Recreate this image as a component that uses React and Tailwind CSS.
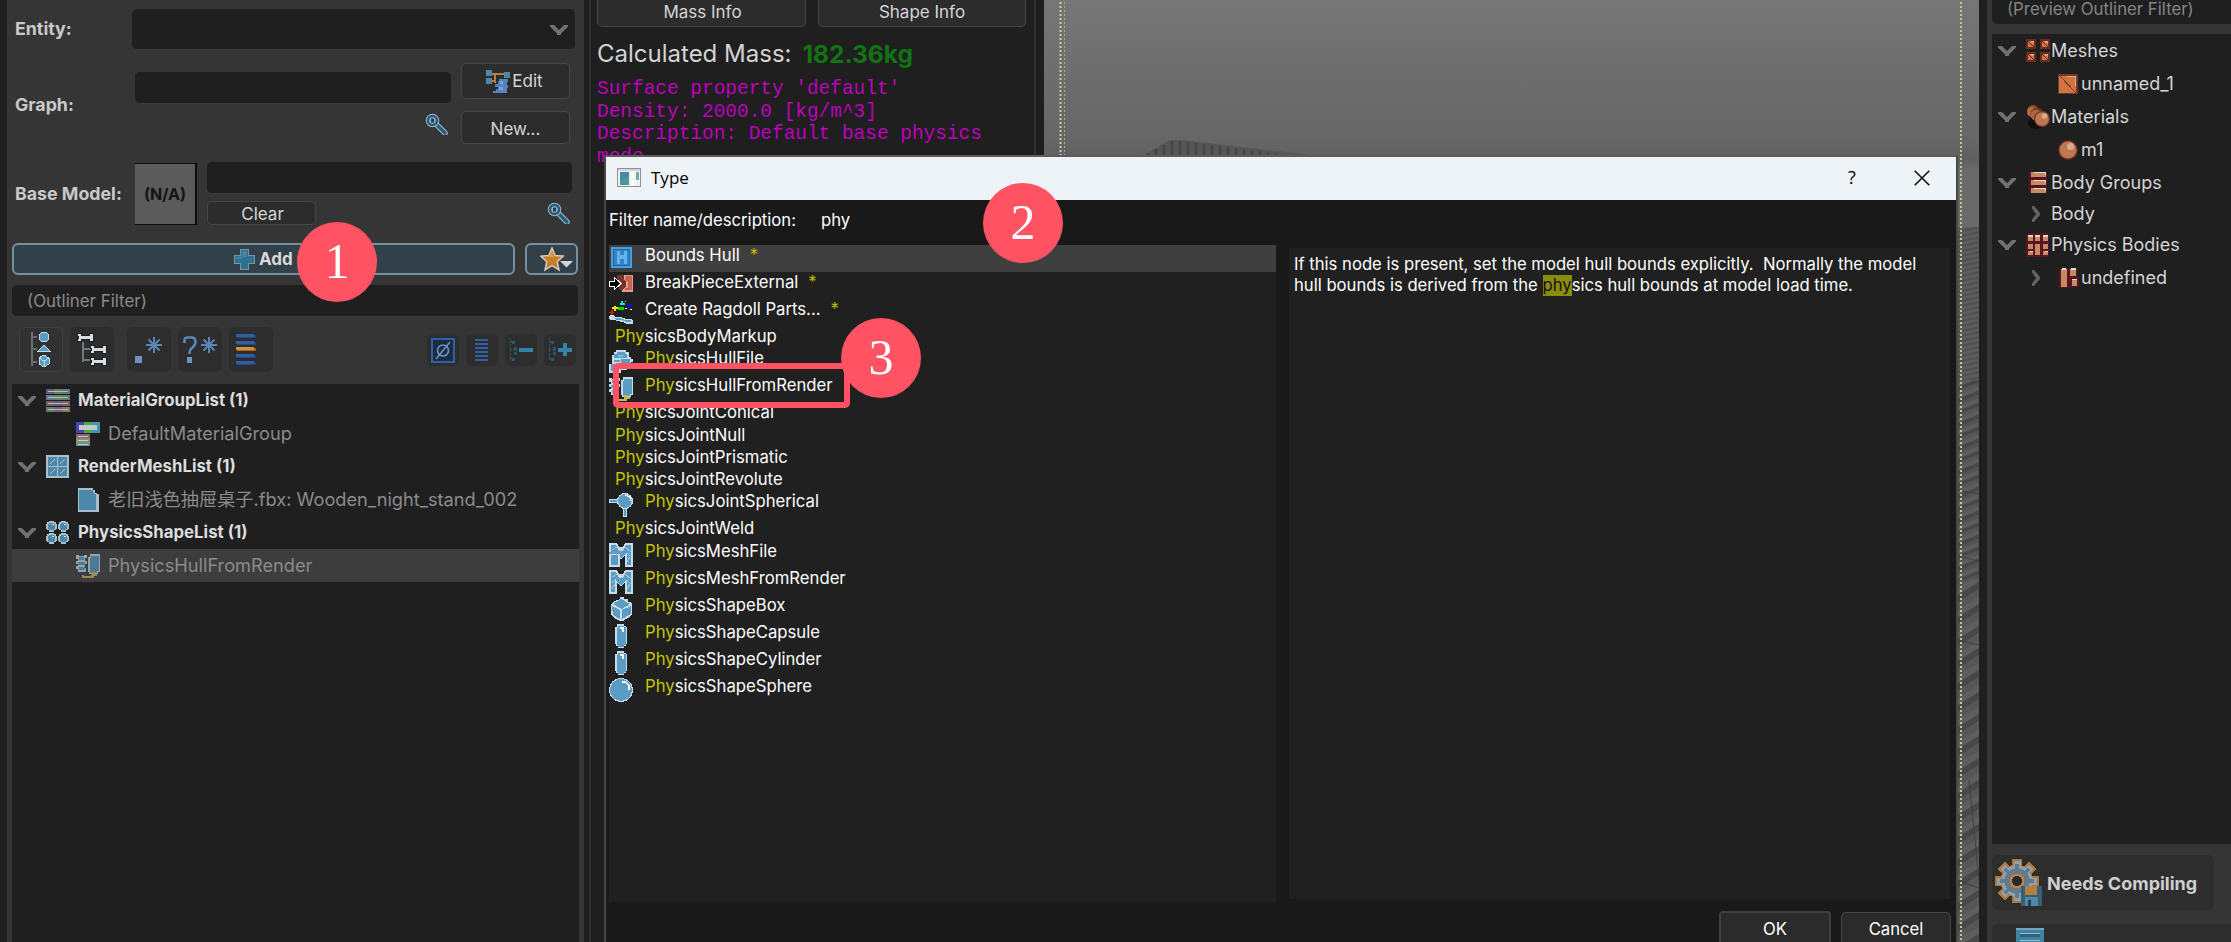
import React from "react";

const B = "#5a9cc4";
const L = "#c3dce8";

function Px({ w = 24, h = 24, vb, className = "", children, smooth }) {
  return (
    <svg
      width={w}
      height={h}
      viewBox={vb || `0 0 ${w} ${h}`}
      className={`block shrink-0 ${className}`}
      shapeRendering={smooth ? "auto" : "crispEdges"}
    >
      {children}
    </svg>
  );
}

/* ---------- small glyphs ---------- */

function ChevronDown() {
  return (
    <Px w={18} h={12} smooth>
      <path d="M0 1h4l5 5 5-5h4v1.500l-7 7V11H7V9.500L0 2.500z" fill="#6f7173" />
    </Px>
  );
}

function ChevronRight() {
  return (
    <Px w={10} h={16} smooth>
      <path d="M1 0h2l6 7v2l-6 7H1v-2.500l4-5.500-4-5.500z" fill="#606264" />
    </Px>
  );
}

function Magnifier() {
  return (
    <Px w={23} h={22} smooth>
      <path d="M12 12l8 8" stroke="#a3b3bb" strokeWidth="5.500" strokeLinecap="round" />
      <path d="M12 12l8 8" stroke="#1f5f86" strokeWidth="3.200" strokeLinecap="round" />
      <circle cx="7.500" cy="7.500" r="6.800" fill="#a3b3bb" />
      <circle cx="7.500" cy="7.500" r="5.800" fill="#1f5f86" />
      <circle cx="7.500" cy="7.500" r="3.200" fill="#a3b3bb" />
      <rect x="6" y="5.500" width="3" height="4" fill="#2b3a42" />
    </Px>
  );
}

function EditIcon() {
  return (
    <Px>
      <path d="M6 4h12M9 5v8M6 11h3" stroke="#b8803c" strokeWidth="2" fill="none" />
      <rect x="0" y="0" width="6" height="6" fill="#4f86a8" />
      <rect x="18" y="2" width="6" height="6" fill="#4f86a8" />
      <rect x="0" y="8" width="6" height="6" fill="#4f86a8" />
      <path d="M13 9h9v3h-1v3h1v3h-1v5H7v-2h3v-2h2v-2h-3v-3h3v-3h1z" fill="#5583c2" />
      <path d="M14 11h3v3h-3zM13 17h4v3h-4z" fill="#78a6dc" />
    </Px>
  );
}

function PlusIcon() {
  return (
    <Px w={21} h={21}>
      <path d="M6 0h9v6h6v9h-6v6H6v-6H0V6h6z" fill="#7894a1" />
      <path d="M7 1h7v6h6v7h-6v6H7v-6H1V7h6z" fill="#2d6f91" />
      <path d="M8 2h5v6H8zM2 8h6v2H2z" fill="#3f87aa" />
    </Px>
  );
}

function StarIcon() {
  return (
    <Px w={33} h={25} smooth>
      <path d="M12 1l3.200 7.500 8 .6-6 5.600 1.800 8.300-7-4.300L5 23l1.800-8.300-6-5.600 8-.6z" fill="#c57d2a" stroke="#d8cdbd" strokeWidth="1.500" />
      <path d="M12 4l2 6H8z" fill="#dc9a42" />
      <path d="M20 14h13l-6.500 6.500z" fill="#d5d5d5" />
    </Px>
  );
}

/* ---------- outliner toolbar ---------- */

function TreeShapesIcon() {
  return (
    <Px w={20} h={36}>
      <path d="M1 0v34M1 5h5M1 17h5M1 30h5" stroke="#6d6d6d" strokeWidth="1.500" fill="none" />
      <circle cx="13" cy="5" r="5" fill={B} stroke={L} />
      <path d="M13 13l6 6H7z" fill={B} stroke={L} />
      <path d="M13 23l5 3v6l-5 3-5-3v-6z" fill={B} stroke={L} />
      <path d="M8 26l5 3 5-3M13 29v6" stroke={L} fill="none" />
    </Px>
  );
}

function Bone({ x, y }) {
  return (
    <path
      transform={`translate(${x} ${y})`}
      d="M0 0h4v2h8V0h4v8h-4V6H4v2H0V5h1V3H0z"
      fill="#dcdcdc"
      stroke="#16232b"
      strokeWidth="1"
    />
  );
}

function BonesIcon() {
  return (
    <Px w={30} h={36}>
      <path d="M6 10v20M6 17h8M6 28h8" stroke="#777" strokeWidth="2" fill="none" />
      <Bone x={0} y={1} />
      <Bone x={13} y={13} />
      <Bone x={13} y={25} />
    </Px>
  );
}

function Asterisk({ x, y }) {
  return (
    <path
      transform={`translate(${x} ${y})`}
      d="M8 0v16M0 8h16M2.500 2.500l11 11M13.500 2.500l-11 11"
      stroke="#5b86b6"
      strokeWidth="2"
      fill="none"
    />
  );
}

function RegexIcon() {
  return (
    <Px w={30} h={28} smooth>
      <rect x="1" y="20" width="7" height="7" fill="#6c93c0" />
      <Asterisk x={12} y={1} />
    </Px>
  );
}

function WildcardIcon() {
  return (
    <Px w={34} h={28} smooth>
      <path d="M1.500 7V4q0-2.500 3-2.500h4q4 0 4 4.500 0 3-3 5.500-3 2-3 6.500" stroke="#5b86b6" strokeWidth="2.600" fill="none" />
      <rect x="4" y="21" width="5" height="6" fill="#6c93c0" />
      <Asterisk x={18} y={1} />
    </Px>
  );
}

function StripesIcon() {
  return (
    <Px w={21} h={32}>
      {[0, 7, 13, 20, 27].map((y, i) => (
        <g key={y}>
          <rect x="1" y={y + 1} width="19" height="3" fill={i === 2 ? "#a8641f" : "#27467c"} />
          <rect x="0" y={y} width="18" height="3" fill={i === 2 ? "#d0923a" : "#2f5fa5"} />
        </g>
      ))}
    </Px>
  );
}

function EmptySetIcon() {
  return (
    <Px w={24} h={25} smooth>
      <rect x="1" y="1" width="22" height="23" fill="#1c2c44" stroke="#2f5fa5" strokeWidth="2" />
      <circle cx="12" cy="12.500" r="5.500" fill="none" stroke="#6c93c0" strokeWidth="1.600" />
      <path d="M19 4L5 21" stroke="#6c93c0" strokeWidth="1.600" />
    </Px>
  );
}

function LinesIcon() {
  return (
    <Px w={14} h={22}>
      {[0, 4, 8, 12, 16, 20].map((y) => (
        <rect key={y} x="0" y={y} width="13" height="2" fill="#2f5fa5" />
      ))}
    </Px>
  );
}

function CollapseIcon({ plus }) {
  return (
    <Px w={24} h={24}>
      <path d="M1 0v22M1 3h3M1 11h6M1 20h3" stroke="#2d5566" fill="none" strokeDasharray="2 1" />
      <rect x="3" y="3" width="3" height="3" fill="#2d5566" />
      <rect x="5" y="9" width="3" height="4" fill="#2d5566" />
      <rect x="5" y="14" width="3" height="3" fill="#2d5566" />
      <rect x="3" y="20" width="3" height="3" fill="#2d5566" />
      <rect x="10" y="10" width="14" height="4" fill="#3583a8" />
      {plus && <rect x="15" y="5" width="4" height="13" fill="#3583a8" />}
    </Px>
  );
}

/* ---------- outliner tree ---------- */

function MaterialListIcon() {
  const c = [
    ["#635b80", "#65815c", "#5c777e"],
    ["#5c7f87", "#628467", "#5f7b71"],
    ["#805c64", "#635b80", "#805c64"],
    ["#65815c", "#805c7a", "#807e62"],
  ];
  return (
    <Px>
      {c.map((r, i) => (
        <g key={i}>
          {r.map((k, j) => (
            <rect key={j} x={j * 8} y={i * 6} width="8" height="5" fill={k} />
          ))}
          <rect x="2" y={i * 6 + 2} width="20" height="1" fill="#b6bcb6" />
        </g>
      ))}
    </Px>
  );
}

function MaterialGroupIcon() {
  return (
    <Px>
      <rect x="0" y="0" width="8" height="11" fill="#4545b5" />
      <rect x="8" y="0" width="8" height="11" fill="#49a94b" />
      <rect x="16" y="0" width="8" height="11" fill="#4691b5" />
      <rect x="3" y="3" width="18" height="5" fill="#bccdc4" />
      <rect x="0" y="12" width="14" height="4" fill="#8f5f7a" />
      <rect x="0" y="16" width="14" height="4" fill="#8a9068" />
      <rect x="0" y="20" width="14" height="4" fill="#639596" />
      <path d="M2 14h10M2 18h10M2 22h10" stroke="#c4c8c0" />
    </Px>
  );
}

function MeshListIcon() {
  return (
    <Px>
      <rect width="23" height="23" fill="#a9c0cc" />
      {[2, 12].map((x) =>
        [2, 12].map((y) => (
          <g key={`${x}-${y}`}>
            <rect x={x} y={y} width="9" height="9" fill="#4d87aa" />
            <path d={`M${x + 2} ${y + 7}L${x + 7} ${y + 2}`} stroke="#a9c0cc" />
          </g>
        ))
      )}
    </Px>
  );
}

function FileIcon() {
  return (
    <Px>
      <path d="M2 0h15v2h2v3h2v1h2v18H2z" fill="#a9c0cc" />
      <path d="M3 2h14v2h1v2h2v16H3z" fill="#4d87aa" />
    </Px>
  );
}

function ShapeListIcon() {
  return (
    <Px>
      {[0, 12].map((x) =>
        [0, 12].map((y) => (
          <g key={`${x}-${y}`} transform={`translate(${x} ${y})`}>
            <path d="M3 0h5v1h2v2h1v5h-1v1H8v2H3V9H1V8H0V3h1V1h2z" fill="#a9c0cc" />
            <path d="M3 2h5v1h1v5H8v1H3V8H2V3h1z" fill="#4d87aa" />
            <rect x="6" y="3" width="2" height="1" fill="#dde9ee" />
          </g>
        ))
      )}
    </Px>
  );
}

function HullRenderIcon({ dim }) {
  return (
    <Px className={dim ? "opacity-65" : ""}>
      <path d="M0 1h3v1h5V1h3v3H9v3h2v3H9v4h1v4H2v-3H0v-3h2v-2H0V7h2V5H0z" fill={L} />
      <path d="M3 3h5v3H3zM2 8h7v3H2zM3 13h6v3H3z" fill={B} />
      <path d="M14 0h10v18h-2v2h-9v-2h-1V3h2z" fill={L} />
      <path d="M15 2h8v15h-2v2h-7V4h1z" fill={B} />
      <path d="M7 21v2h10v-2" stroke="#c4b958" strokeWidth="1.500" fill="none" />
      <path d="M15 18h4v2h2v2h-6z" fill="#c4b958" />
    </Px>
  );
}

/* ---------- dialog list icons ---------- */

function BoundsIcon() {
  return (
    <Px>
      <rect x="2" y="0" width="21" height="21" fill="#3ea1ec" />
      <path d="M4.500 2.500h16v16h-16z" fill="#4080b8" stroke="#256496" />
      <path d="M8 4h3v4h4V4h3v13h-3v-5h-4v5H8z" fill="#5ab4f5" />
    </Px>
  );
}

function BreakIcon() {
  return (
    <Px>
      <path d="M8 1h16v17H13v-4h3V9l-2-2V4z" fill="#dba090" />
      <path d="M17 2h6v14h-7v-2h3V8l-3-2z" fill="#d1604c" />
      <path d="M8 1h7v4l2 3v5l-4 3h-3z" fill="#74332b" />
      <path d="M0 7h5V3l7 6.500L5 16v-4H0z" fill="#000" stroke="#fff" strokeWidth="1" />
    </Px>
  );
}

function RagdollIcon() {
  return (
    <Px>
      <path d="M12 0h2v2h2v2h-4zM11 2h4v2h-4z" fill="#00e5e5" />
      <path d="M19 3h3v3h-3zM18 3h5v2h-5z" fill="#1010e0" />
      <path d="M5 5h2v5H5zM3 6h6v2H3z" fill="#e8e800" />
      <path d="M9 6h6v3H9z" fill="#00d800" />
      <path d="M2 9h2v5H2zM0 11h5v1H0z" fill="#e01010" />
      <path d="M16 0h1v1h-1zM16 7h2v1h-2zM21 8h2v1h-2z" fill="#fff" />
      <path d="M1 14h4l1 2h6l5 2h5l2 2v3h-6l-4-2-6-1-3-1H1l-1-2z" fill={L} />
      <path d="M6 17h5l5 2h6v2h-4l-5-2H7z" fill={B} />
    </Px>
  );
}

function HullFileIcon() {
  return (
    <Px>
      <path d="M7 0h10v2h3v5h2v2h2v3h-2v5h-4v3h-6v3H0v-9h3V5h2V2h2z" fill={L} />
      <path d="M8 2h8v2h2v4H5V4h3zM5 10h6v2H5zM12 9h9v6h-3v3h-6v-4zM2 14h7v7H2z" fill={B} />
      <path d="M9 5h5v2H9z" fill="#8bbad4" />
    </Px>
  );
}

function SphericalIcon() {
  return (
    <Px>
      <rect x="0" y="6" width="10" height="4" fill={L} />
      <rect x="1" y="7" width="9" height="2" fill={B} />
      <rect x="14" y="14" width="4" height="10" fill={L} />
      <rect x="15" y="15" width="2" height="8" fill={B} />
      <circle cx="16" cy="8" r="8" fill={L} />
      <circle cx="16" cy="8" r="6.800" fill={B} />
      <path d="M16 2l5 2 1 4" stroke="#fff" strokeWidth="1.500" fill="none" />
    </Px>
  );
}

function MeshMIcon({ file }) {
  return (
    <Px>
      <path d="M0 0h8l2 4h4l2-4h8v24h-8V13l-4 3-4-3v11H0z" fill={L} />
      <path d="M2 2h5l3 6h4l3-6h5v20h-4V10l-6 5-6-5v12H2z" fill={B} />
      <path d="M3 7l5-3M16 4l6 5M3 13l4-4M18 10l4 4M18 19l3-5M3 19l3-5" stroke="#9cc3d9" />
      {file && <path d="M0 10h9l2 2v12H0z" fill={L} />}
      {file && <path d="M2 12h7v10H2z" fill={B} />}
      {file && <path d="M0 9h12v2H0z" fill="#7d99a8" />}
    </Px>
  );
}

function BoxIcon() {
  return (
    <Px>
      <path d="M11 0h4v2h4v3h3l1 2v10l-4 4-5 3h-3l-6-3-3-4V7l4-3 5-2z" fill={L} />
      <path d="M12 2l9 5-8 5-9-5zM3 9l8 4v9l-7-4zM22 9v8l-9 5v-9z" fill={B} />
    </Px>
  );
}

function CapsuleIcon() {
  return (
    <Px>
      <path d="M8 0h7v2h2v1h1v17h-1v2h-2v2H9v-2H7v-2H6V3h2z" fill={L} />
      <path d="M9 2h6v1h2v18h-2v2H9v-2H8V4h1z" fill={B} />
      <path d="M11 4h3v4" stroke="#fff" strokeWidth="1.500" fill="none" />
    </Px>
  );
}

function SphereIcon() {
  return (
    <Px>
      <circle cx="12" cy="12" r="12" fill={L} />
      <circle cx="12" cy="12" r="10.800" fill={B} />
      <path d="M13 3.500h3l4 4v4" stroke="#fff" strokeWidth="2" fill="none" />
    </Px>
  );
}

/* ---------- preview outliner icons ---------- */

function MeshesIcon() {
  return (
    <Px w={24} h={24}>
      {[0, 14].map((x) =>
        [0, 13].map((y) => (
          <g key={`${x}-${y}`} transform={`translate(${x} ${y})`}>
            <rect width="10" height="10" fill="#672d22" />
            <rect x="2" y="2" width="6" height="6" fill="#cf7444" />
            <rect x="5" y="2" width="3" height="2" fill="#e0a07c" />
            <path d="M2 2l6 6" stroke="#5f2415" />
          </g>
        ))
      )}
    </Px>
  );
}

function MeshIcon() {
  return (
    <Px w={20} h={20}>
      <rect width="20" height="20" fill="#74382a" />
      <rect x="1" y="2" width="17" height="17" fill="#cf7444" />
      <path d="M9 2h9v10h-1V3H9z" fill="#dca88c" />
      <path d="M2 2l16 17" stroke="#8a3c22" />
    </Px>
  );
}

function MaterialsIcon() {
  return (
    <Px w={24} h={24} smooth>
      <ellipse cx="10" cy="18" rx="8" ry="6" fill="#0e0e0e" />
      <circle cx="7" cy="6" r="6" fill="#8f4a30" />
      <circle cx="6" cy="7" r="5" fill="#b56a48" />
      <circle cx="11" cy="9" r="6.500" fill="#6d3222" />
      <circle cx="10" cy="10" r="5.500" fill="#a86244" />
      <circle cx="16" cy="14" r="8" fill="#783a26" />
      <circle cx="16" cy="14" r="6.800" fill="#c0764f" />
      <circle cx="18.500" cy="11" r="2.800" fill="#d9ac90" />
    </Px>
  );
}

function MaterialIcon() {
  return (
    <Px w={20} h={20} smooth>
      <circle cx="10" cy="10" r="9.800" fill="#6d3222" />
      <circle cx="10" cy="10" r="8.500" fill="#c0764f" />
      <circle cx="12.500" cy="6.500" r="3.500" fill="#d9ac90" />
    </Px>
  );
}

function BodyGroupsIcon() {
  return (
    <Px w={24} h={22}>
      <rect x="3" y="0" width="18" height="21" fill="#5a1320" />
      {[0, 8, 16].map((y) => (
        <g key={y}>
          <rect x="5" y={y} width="15" height="5" fill="#c58a60" />
          <path d={`M8 ${y}h12v3h-1v-2H8z`} fill="#dcdad6" />
        </g>
      ))}
    </Px>
  );
}

function BodiesIcon() {
  return (
    <Px w={24} h={24}>
      <path d="M1 0h22v24H0V2z" fill="#5a1320" />
      {[2, 9, 17].map((x) => (
        <g key={x} fill="#c58a60">
          <rect x={x} y="2" width="5" height="6" />
          <rect x={x} y="11" width="5" height="5" />
          <rect x={x} y="18" width="5" height="4" />
          <rect x={x} y="2" width="5" height="2" fill="#dcdad6" />
          <rect x={x + 2} y="18" width="3" height="1" fill="#dcdad6" />
        </g>
      ))}
      <rect x="9" y="11" width="5" height="11" fill="#c58a60" />
    </Px>
  );
}

function BodyIcon() {
  return (
    <Px w={20} h={20}>
      <path d="M2 0h6l2 1 2-1h6v9h2v10h-9l-2 1H2l-2-1V2z" fill="#5a1320" />
      <rect x="2" y="1" width="6" height="18" fill="#c58a60" />
      <rect x="11" y="1" width="6" height="7" fill="#c58a60" />
      <rect x="13" y="11" width="5" height="7" fill="#c58a60" />
      <path d="M3 0h4v2H3zM12 0h5v2h-5zM13 11h5v1h-5z" fill="#dcdad6" />
    </Px>
  );
}

function GearIcon() {
  return (
    <Px w={48} h={48}>
      <g transform="translate(22 22)">
        {[0, 45, 90, 135].map((a) => (
          <rect key={a} x="-5" y="-22" width="10" height="44" transform={`rotate(${a})`} fill="#b07638" />
        ))}
        <circle r="16.500" fill="#b07638" />
        {[0, 45, 90, 135].map((a) => (
          <rect key={a} x="-3.500" y="-20" width="7" height="40" transform={`rotate(${a})`} fill="#8f9fab" />
        ))}
        <circle r="15.500" fill="#8f9fab" />
        <circle r="12.500" fill="#627a8d" />
        {[0, 45, 90, 135].map((a) => (
          <rect key={a} x="-2" y="-17" width="4" height="34" transform={`rotate(${a})`} fill="#627a8d" />
        ))}
        <circle r="7.500" fill="#c08040" />
        <circle r="5" fill="#252a2e" />
      </g>
      <rect x="26" y="27" width="21" height="20" fill="#356078" />
      <rect x="30" y="27" width="12" height="9" fill="#b57f42" />
      <rect x="30" y="38" width="13" height="9" fill="#5088a6" />
      <rect x="33" y="41" width="3" height="6" fill="#1f3f52" />
    </Px>
  );
}

function DocIcon() {
  return (
    <Px w={28} h={14}>
      <rect width="28" height="18" fill="#3f83a3" />
      <rect width="28" height="2" fill="#78a4ba" />
      <path d="M4 5h20M4 12h20" stroke="#93bccf" />
      <rect x="4" y="6" width="20" height="3" fill="#2c6380" />
    </Px>
  );
}

function WindowIcon() {
  return (
    <Px w={24} h={20}>
      <rect x="0.500" y="0.500" width="23" height="18" fill="#eef0f2" stroke="#8b9197" />
      <rect x="1" y="1" width="22" height="2" fill="#cfd6de" />
      <rect x="3" y="4" width="9" height="13" fill="#4c9a94" />
      <path d="M3 4h9v4l-9 5z" fill="#4a88a8" />
      <rect x="14" y="4" width="4" height="6" fill="#fff" />
      <rect x="19" y="4" width="3" height="8" fill="#6fb0a8" />
      <rect x="14" y="12" width="4" height="5" fill="#fff" />
    </Px>
  );
}

/* ---------- pieces ---------- */

const field = "rounded-[5px] bg-[#1f1f1f] border-b border-[#3a3a3a]";
const button =
  "flex items-center justify-center rounded-[5px] border border-[#474747] bg-[#2c2c2c] text-[#d6d6d6]";

function ToolButton({ children, className = "" }) {
  return (
    <div className={`flex h-[45px] w-[44px] shrink-0 items-center justify-center rounded-[6px] bg-[#2d2d2d] pt-[1px] ${className}`}>
      {children}
    </div>
  );
}

function SmallTool({ children }) {
  return (
    <div className="flex h-8 w-8 shrink-0 items-center justify-center rounded-[6px] bg-[#2d2d2d] pt-[1px]">{children}</div>
  );
}

function GroupRow({ icon, children }) {
  return (
    <div className="flex h-[33px] items-center pl-[6px]">
      <ChevronDown />
      <div className="ml-[10px] mr-2 w-6">{icon}</div>
      <span className="text-[16.800px] font-bold text-[#dcdcdc]">{children}</span>
    </div>
  );
}

function ItemRow({ icon, selected, children }) {
  return (
    <div className={`flex h-[33px] items-center pl-16 ${selected ? "bg-[#3d3d3d]" : ""}`}>
      <div className="mr-2 w-6">{icon}</div>
      <span className="text-[18.200px] text-[#8b8b8b]">{children}</span>
    </div>
  );
}

function LeftPanel() {
  return (
    <div className="flex w-[577px] shrink-0 flex-col bg-[#353535] pl-[5px] pt-[9px]">
      <div className="flex h-[41px] items-center">
        <div className="w-[120px] pl-[3px] text-[17.800px] font-bold text-[#c9c9c9]">Entity:</div>
        <div className={`flex h-full w-[443px] items-center justify-end pr-[7px] pt-[1px] ${field}`}>
          <ChevronDown />
        </div>
      </div>
      <div className="mt-[13px] flex h-[81px]">
        <div className="flex w-[123px] items-center pl-[3px] pt-[3px] text-[17.800px] font-bold text-[#c9c9c9]">
          Graph:
        </div>
        <div className="flex w-[316px] flex-col items-end pt-[9px]">
          <div className={`h-8 w-full ${field}`} />
          <div className="mr-[3px] mt-[9px]">
            <Magnifier />
          </div>
        </div>
        <div className="ml-[10px] flex w-[109px] flex-col justify-between text-[17px]">
          <div className={`h-9 pr-[2px] pt-[2px] ${button}`}>
            <EditIcon />
            <span className="ml-[2px]">Edit</span>
          </div>
          <div className={`h-[33px] pt-1 ${button}`}>New...</div>
        </div>
      </div>
      <div className="mt-[18px] flex h-[63px]">
        <div className="flex w-[123px] items-center pl-[3px] pt-[2px] text-[17.800px] font-bold text-[#c9c9c9]">
          Base Model:
        </div>
        <div className="mt-[1px] flex w-[62px] items-center justify-center border-b border-r-2 border-t border-[#0d0d0d] bg-[#5b5b5b] text-[16px] font-bold text-[#141414]">
          (N/A)
        </div>
        <div className="ml-[10px] flex w-[365px] flex-col justify-between">
          <div className={`h-8 ${field}`} />
          <div className="flex h-6 items-start justify-between">
            <div className={`h-6 w-[109px] pl-[2px] pt-1 text-[17px] ${button}`}>Clear</div>
            <div className="mt-[1px] pr-[2px]">
              <Magnifier />
            </div>
          </div>
        </div>
      </div>
      <div className="mt-[18px] flex h-8 gap-[10px]">
        <div className="flex w-[503px] items-center rounded-[6px] border-2 border-[#7690a0] bg-[#324049] pl-[220px] pt-[1px] text-[17px] font-bold text-[#d9d9d9]">
          <PlusIcon />
          <span className="ml-1">Add</span>
        </div>
        <div className="flex w-[53px] items-center rounded-[6px] border-2 border-[#7690a0] bg-[#324049] pl-[13px]">
          <StarIcon />
        </div>
      </div>
      <div className={`mt-[10px] flex h-8 w-[566px] items-center pl-[15px] pt-[2px] text-[16.900px] text-[#8a8a8a] ${field}`}>
        (Outliner Filter)
      </div>
      <div className="mt-[10px] flex h-[45px] w-[566px] items-center pl-[7px]">
        <ToolButton className="border border-[#3f3f3f] bg-[#313131]">
          <TreeShapesIcon />
        </ToolButton>
        <ToolButton className="ml-[7px]">
          <BonesIcon />
        </ToolButton>
        <ToolButton className="ml-[13px]">
          <RegexIcon />
        </ToolButton>
        <ToolButton className="ml-[7px]">
          <WildcardIcon />
        </ToolButton>
        <ToolButton className="ml-[7px] pr-[10px]">
          <StripesIcon />
        </ToolButton>
        <div className="ml-auto flex gap-[7px] pr-[2px]">
          <SmallTool>
            <EmptySetIcon />
          </SmallTool>
          <SmallTool>
            <LinesIcon />
          </SmallTool>
          <SmallTool>
            <CollapseIcon />
          </SmallTool>
          <SmallTool>
            <CollapseIcon plus />
          </SmallTool>
        </div>
      </div>
      <div className="mt-3 w-[567px] flex-1 bg-[#1f1f1f]">
        <GroupRow icon={<MaterialListIcon />}>MaterialGroupList (1)</GroupRow>
        <ItemRow icon={<MaterialGroupIcon />}>DefaultMaterialGroup</ItemRow>
        <GroupRow icon={<MeshListIcon />}>RenderMeshList (1)</GroupRow>
        <ItemRow icon={<FileIcon />}>老旧浅色抽屉桌子.fbx: Wooden_night_stand_002</ItemRow>
        <GroupRow icon={<ShapeListIcon />}>PhysicsShapeList (1)</GroupRow>
        <ItemRow icon={<HullRenderIcon dim />} selected>
          PhysicsHullFromRender
        </ItemRow>
      </div>
    </div>
  );
}

function MassPanel() {
  return (
    <div className="ml-[5px] w-[447px] shrink-0 border-x-2 border-[#303030] bg-[#1f1f1f] pl-[6px]">
      <div className="flex h-[27px] gap-3 text-[17px] text-[#d6d6d6]">
        <div className="flex w-[209px] justify-center rounded-b-[5px] border border-t-0 border-[#474747] bg-[#2c2c2c] pl-[2px] pt-[1px] leading-[22px]">
          Mass Info
        </div>
        <div className="flex w-[208px] justify-center rounded-b-[5px] border border-t-0 border-[#474747] bg-[#2c2c2c] pt-[1px] leading-[22px]">
          Shape Info
        </div>
      </div>
      <div className="mt-[11px] flex h-8 items-center gap-[11px] whitespace-nowrap text-[24px] text-[#d3d3d3]">
        <span>Calculated Mass:</span>
        <span className="text-[24.500px] font-bold text-[#127312]">182.36kg</span>
      </div>
      <div className="mt-2 whitespace-pre font-['Liberation_Mono',monospace] text-[19.450px] leading-[22.500px] text-[#bd00bd]">
        {"Surface property 'default'\nDensity: 2000.0 [kg/m^3]\nDescription: Default base physics\nmode"}
      </div>
    </div>
  );
}

function Viewport() {
  return (
    <div className="ml-[8px] w-[935px] shrink-0">
      <svg width="935" height="942" viewBox="0 0 935 942" className="block">
        <defs>
          <linearGradient id="sky" x1="0" y1="0" x2="0" y2="1">
            <stop offset="0" stopColor="#767676" />
            <stop offset="0.150" stopColor="#666" />
            <stop offset="0.170" stopColor="#5f5f5f" />
            <stop offset="0.180" stopColor="#6a6a6a" />
            <stop offset="1" stopColor="#646464" />
          </linearGradient>
          <pattern id="step" width="90" height="12" patternUnits="userSpaceOnUse" patternTransform="skewY(-22)">
            <rect width="90" height="12" fill="#555" />
            <rect width="90" height="4" fill="#494949" />
            <rect y="8" width="90" height="4" fill="#5e5e5e" />
          </pattern>
          <pattern id="fine" width="90" height="5" patternUnits="userSpaceOnUse" patternTransform="skewY(-12)">
            <rect width="90" height="5" fill="#5c5c5c" />
            <rect width="90" height="2" fill="#4f4f4f" />
          </pattern>
          <pattern id="big" width="90" height="22" patternUnits="userSpaceOnUse" patternTransform="skewY(-32)">
            <rect width="90" height="22" fill="#565656" />
            <rect width="90" height="7" fill="#484848" />
            <rect y="15" width="90" height="7" fill="#5e5e5e" />
          </pattern>
        </defs>
        <rect width="935" height="942" fill="url(#sky)" />
        <path d="M96 157l30-17h12l146 17z" fill="#565656" />
        {[104, 112, 120, 128, 136, 144, 152, 160, 168, 176, 184, 192, 200, 208, 216, 224, 232].map((x) => (
          <path
            key={x}
            d={`M${x} 157V${x < 130 ? 153 - (x - 104) / 2 : 140 + (x - 128) * 0.13}`}
            stroke="#464646"
            strokeWidth="2.500"
          />
        ))}
        <rect x="910" y="227" width="25" height="153" fill="url(#fine)" />
        <rect x="910" y="380" width="25" height="200" fill="url(#step)" />
        <rect x="910" y="580" width="25" height="362" fill="url(#big)" />
        <path d="M912 490l23 4M912 556l23 5M912 640l23 5M912 880l23 8M925 780l10 100" stroke="#424242" fill="none" />
        <path d="M16.500 2v155" stroke="#cfcfa4" strokeWidth="2" strokeDasharray="2 2" />
        <path d="M20.500 2v155" stroke="#b8a480" strokeWidth="1" strokeDasharray="2 2" />
        <path d="M917 2v940" stroke="#c4c49a" strokeWidth="2" strokeDasharray="2 2" />
      </svg>
    </div>
  );
}

function PreviewRow({ icon, gap = "ml-[10px]", children }) {
  return (
    <div className="flex h-[33px] items-center pl-[6px]">
      <ChevronDown />
      <div className={`mr-[1px] w-6 ${gap}`}>{icon}</div>
      <span>{children}</span>
    </div>
  );
}

function RightPanel() {
  return (
    <div className="ml-[8px] flex w-[244px] shrink-0 flex-col overflow-hidden whitespace-nowrap bg-[#353535] pl-[5px]">
      <div className="h-6 shrink-0 rounded-bl-[5px] bg-[#1f1f1f] pl-[15px] text-[16.800px] leading-[18px] text-[#858585]">
        (Preview Outliner Filter)
      </div>
      <div className="mt-[10px] h-[810px] shrink-0 bg-[#1f1f1f] text-[18px] text-[#d4d4d4]">
        <PreviewRow icon={<MeshesIcon />}>Meshes</PreviewRow>
        <div className="flex h-[33px] items-center gap-[3px] pl-[66px]">
          <MeshIcon />
          unnamed_1
        </div>
        <PreviewRow icon={<MaterialsIcon />}>Materials</PreviewRow>
        <div className="flex h-[33px] items-center gap-[3px] pl-[66px]">
          <MaterialIcon />
          m1
        </div>
        <PreviewRow icon={<BodyGroupsIcon />}>Body Groups</PreviewRow>
        <div className="flex h-[29px] items-center gap-[10px] pl-[39px]">
          <ChevronRight />
          Body
        </div>
        <PreviewRow icon={<BodiesIcon />}>Physics Bodies</PreviewRow>
        <div className="flex h-[33px] items-center pl-[39px]">
          <ChevronRight />
          <div className="ml-[18px] mr-[2px]">
            <BodyIcon />
          </div>
          undefined
        </div>
      </div>
      <div className="mt-[11px] flex h-[55px] w-[222px] shrink-0 items-center gap-[4px] rounded-[6px] bg-[#2d2d2d] pl-[3px] text-[18px] font-bold text-[#cfcfcf]">
        <GearIcon />
        <span className="pt-[2px]">Needs Compiling</span>
      </div>
      <div className="mt-[14px] flex-1 rounded-tl-[6px] bg-[#2d2d2d] pl-6 pt-1">
        <DocIcon />
      </div>
    </div>
  );
}

const TYPES = [
  { icon: <BoundsIcon />, text: "Bounds Hull", star: true, selected: true },
  { icon: <BreakIcon />, text: "BreakPieceExternal", star: true },
  { icon: <RagdollIcon />, text: "Create Ragdoll Parts...", star: true },
  { match: "Phy", text: "sicsBodyMarkup" },
  { icon: <HullFileIcon />, match: "Phy", text: "sicsHullFile" },
  { icon: <HullRenderIcon />, match: "Phy", text: "sicsHullFromRender" },
  { match: "Phy", text: "sicsJointConical" },
  { match: "Phy", text: "sicsJointNull" },
  { match: "Phy", text: "sicsJointPrismatic" },
  { match: "Phy", text: "sicsJointRevolute" },
  { icon: <SphericalIcon />, match: "Phy", text: "sicsJointSpherical" },
  { match: "Phy", text: "sicsJointWeld" },
  { icon: <MeshMIcon file />, match: "Phy", text: "sicsMeshFile" },
  { icon: <MeshMIcon />, match: "Phy", text: "sicsMeshFromRender" },
  { icon: <BoxIcon />, match: "Phy", text: "sicsShapeBox" },
  { icon: <CapsuleIcon />, match: "Phy", text: "sicsShapeCapsule" },
  { icon: <CapsuleIcon />, match: "Phy", text: "sicsShapeCylinder" },
  { icon: <SphereIcon />, match: "Phy", text: "sicsShapeSphere" },
];

function TypeRow({ icon, match, text, star, selected }) {
  return (
    <div
      className={`flex items-start whitespace-nowrap ${icon ? "h-[27px]" : "h-[22.300px] pl-[6px]"} ${
        selected ? "bg-[#3f3f3f]" : ""
      }`}
    >
      {icon && <div className="mr-3 h-6 w-6 shrink-0 pt-[2px]">{icon}</div>}
      <span className="leading-[21px]">
        {match && <span className="text-[#c3c400]">{match}</span>}
        {text}
        {star && <span className="ml-[10px] text-[#b8b800]">*</span>}
      </span>
    </div>
  );
}

function TypeDialog() {
  return (
    <div className="absolute left-[604px] top-[155px] flex h-[787px] w-[1354px] flex-col border-x-2 border-t-2 border-x-[#484848] border-t-[#5c5c5c] bg-[#191919] text-[16.700px] text-white">
      <div className="flex h-[43px] shrink-0 items-center bg-[#eef3f8] pb-[2px] pl-[11px] text-black">
        <WindowIcon />
        <span className="ml-[10px] flex-1 font-['Open_Sans',sans-serif] text-[17px]">Type</span>
        <span className="w-[10px] text-center font-['Open_Sans',sans-serif] text-[18px]">?</span>
        <svg width="16" height="16" viewBox="0 0 16 16" className="ml-[57px] mr-[26px] block">
          <path d="M.7.7l14.600 14.600M15.300.7L.7 15.300" stroke="#111" strokeWidth="1.600" />
        </svg>
      </div>
      <div className="flex h-[45px] shrink-0 items-center pb-[4px] pl-[3px]">
        <span className="w-[212px] whitespace-nowrap">Filter name/description:</span>
        <span>phy</span>
      </div>
      <div className="flex flex-1 gap-[13px] pl-[3px]">
        <div className="h-[657px] w-[667px] bg-[#202020]">
          {TYPES.map((t) => (
            <TypeRow key={t.text} {...t} />
          ))}
        </div>
        <div className="mt-[3px] h-[651px] w-[661px] whitespace-pre bg-[#202020] pl-[5px] pt-[6px] text-[16.650px] leading-[21px]">
          <div>{"If this node is present, set the model hull bounds explicitly.  Normally the model"}</div>
          <div className="flex">
            <span>{"hull bounds is derived from the "}</span>
            <span className="bg-[#8b8b10] text-[#141414]">phy</span>
            <span>sics hull bounds at model load time.</span>
          </div>
        </div>
      </div>
      <div className="flex h-[31px] shrink-0 justify-end gap-[10px] pr-[5px]">
        <div className="flex h-9 w-28 items-center justify-center rounded-t-[4px] border-2 border-b-0 border-[#3f3f3f] bg-[#2b2b2b]">
          OK
        </div>
        <div className="mt-[1px] flex h-9 w-[110px] items-center justify-center rounded-t-[5px] border border-b-0 border-[#474747] bg-[#2b2b2b] pb-[2px]">
          Cancel
        </div>
      </div>
    </div>
  );
}

function Badge({ children, className }) {
  return (
    <div
      className={`absolute flex h-20 w-20 items-center justify-center rounded-full bg-[#ff5364] pb-[2px] font-['Liberation_Serif',serif] text-[50px] leading-none text-white ${className}`}
    >
      {children}
    </div>
  );
}

export default function App() {
  return (
    <div className="relative flex h-[942px] w-[2231px] overflow-hidden bg-[#1f1f1f] pl-[7px] font-['Inter','Noto_Sans_CJK_SC',sans-serif]">
      <LeftPanel />
      <MassPanel />
      <Viewport />
      <RightPanel />
      <TypeDialog />
      <div className="absolute left-[613px] top-[363px] h-[45px] w-[237px] rounded-[5px] border-[6px] border-[#ff5364]" />
      <Badge className="left-[297px] top-[222px]">1</Badge>
      <Badge className="left-[983px] top-[183px]">2</Badge>
      <Badge className="left-[841px] top-[318px]">3</Badge>
    </div>
  );
}
